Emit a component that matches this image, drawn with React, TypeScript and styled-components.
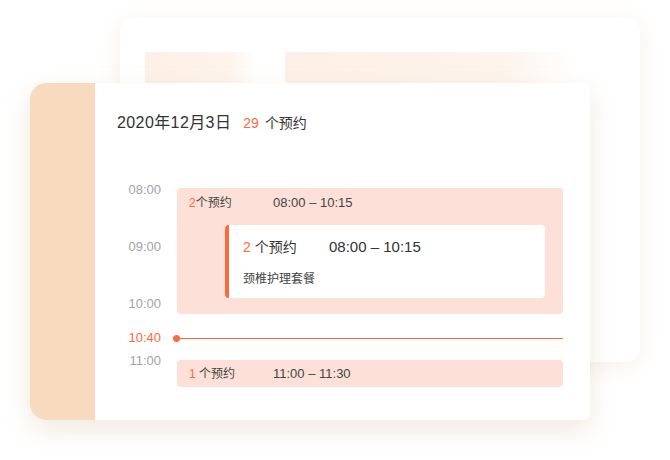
import React from 'react';
import styled, {createGlobalStyle} from "styled-components";

const ORANGE = "#ff6a3d"

const GlobalStyle = createGlobalStyle`
  body {
    margin: 0;
    background: #ffffff;
    font-family: "Liberation Sans", "Noto Sans CJK SC", sans-serif;
  }
`

const Stage = styled.div`
  position: relative;
  width: 670px;
  height: 460px;
  padding: 83px 0 0 30px;
  box-sizing: border-box;
  overflow: hidden;
`

const BackCard = styled.div`
  position: absolute;
  left: 120px;
  top: 18px;
  width: 520px;
  height: 344px;
  border-radius: 14px;
  background: #fff;
  box-shadow: 0 4px 22px rgba(214, 188, 150, 0.22);
  display: flex;
  gap: 28px;
  padding: 34px 0 0 25px;
  box-sizing: border-box;
`

const GhostBar = styled.div<{$w: number}>`
  width: ${p => p.$w}px;
  height: 40px;
  background: linear-gradient(90deg, #fdf0e6 0%, #fdf4ec 75%, #ffffff 100%);
`

const FrontCard = styled.div`
  position: relative;
  display: flex;
  width: 560px;
  height: 337px;
  border-radius: 16px 6px 6px 16px;
  overflow: hidden;
  background: #fff;
  box-shadow: 0 10px 26px rgba(205, 180, 140, 0.28);
`

const Strip = styled.div`
  width: 65px;
  background: #f8dbbf;
`

const Content = styled.div`
  flex: 1;
  padding: 30px 27px 0 22px;
`

const Heading = styled.div`
  display: flex;
  align-items: baseline;
  line-height: 20px;
  color: #333;
`

const DateText = styled.span`
  font-size: 16px;
  letter-spacing: 0.4px;
`

const Total = styled.span`
  margin-left: 12px;
  font-size: 14px;
  color: ${ORANGE};
`

const TotalUnit = styled.span`
  margin-left: 6px;
  font-size: 14px;
`

const Timeline = styled.div`
  display: flex;
  flex-direction: column;
  margin-top: 55px;
`

const Section = styled.div<{$gap?: number}>`
  display: grid;
  grid-template-columns: 44px 1fr;
  column-gap: 16px;
  margin-top: ${p => p.$gap ?? 0}px;
`

const Labels = styled.div`
  display: flex;
  flex-direction: column;
  justify-content: space-between;
  margin: -5px 0 3px;
`

const TimeLabel = styled.div<{$now?: boolean}>`
  text-align: right;
  font-size: 13px;
  line-height: 14px;
  color: ${p => p.$now ? ORANGE : "#a3a3a3"};
`

const Block = styled.div<{$top?: number}>`
  background: #fde0d7;
  border-radius: 4px;
  margin-top: ${p => p.$top ?? 0}px;
  padding: 8px 0 16px;
`

const SlimBlock = styled(Block)`
  padding: 7px 0 6px;
`

const BlockHeader = styled.div`
  display: flex;
  align-items: center;
  padding-left: 12px;
  line-height: 14px;
  color: #444;
`

const Count = styled.span<{$w: number; $size: number}>`
  width: ${p => p.$w}px;
  font-size: ${p => p.$size}px;
`

const Num = styled.span`
  color: ${ORANGE};
`

const Range = styled.span<{$size: number}>`
  font-size: ${p => p.$size}px;
`

const Detail = styled.div`
  margin: 15px 18px 0 48px;
  height: 73px;
  box-sizing: border-box;
  background: #fff;
  border-left: 4px solid ${ORANGE};
  border-radius: 4px;
  padding: 12px 0 0 14px;
`

const DetailHeader = styled.div`
  display: flex;
  align-items: center;
  line-height: 20px;
  color: #333;
`

const Desc = styled.div`
  margin-top: 15px;
  font-size: 12px;
  line-height: 14px;
  color: #444;
`

const NowRow = styled(Section)`
  align-items: center;
`

const NowLine = styled.div`
  display: flex;
  align-items: center;
`

const Dot = styled.span`
  width: 7px;
  height: 7px;
  margin-left: -4px;
  border-radius: 50%;
  background: ${ORANGE};
  flex-shrink: 0;
`

const Rule = styled.span`
  flex: 1;
  height: 1px;
  margin-left: -3px;
  background: #f06a45;
`

const Slot = styled.div`
  margin-top: -6px;
`

export default function App() {
    return (
        <Stage>
            <GlobalStyle/>
            <BackCard>
                <GhostBar $w={112}/>
                <GhostBar $w={290}/>
            </BackCard>
            <FrontCard>
                <Strip/>
                <Content>
                    <Heading>
                        <DateText>2020年12月3日</DateText>
                        <Total>29</Total>
                        <TotalUnit>个预约</TotalUnit>
                    </Heading>
                    <Timeline>
                        <Section>
                            <Labels>
                                <TimeLabel>08:00</TimeLabel>
                                <TimeLabel>09:00</TimeLabel>
                                <TimeLabel>10:00</TimeLabel>
                            </Labels>
                            <Block>
                                <BlockHeader>
                                    <Count $w={84} $size={12}><Num>2</Num>个预约</Count>
                                    <Range $size={13}>08:00 – 10:15</Range>
                                </BlockHeader>
                                <Detail>
                                    <DetailHeader>
                                        <Count $w={86} $size={14}><Num>2</Num> 个预约</Count>
                                        <Range $size={15}>08:00 – 10:15</Range>
                                    </DetailHeader>
                                    <Desc>颈椎护理套餐</Desc>
                                </Detail>
                            </Block>
                        </Section>
                        <NowRow $gap={17}>
                            <TimeLabel $now>10:40</TimeLabel>
                            <NowLine>
                                <Dot/>
                                <Rule/>
                            </NowLine>
                        </NowRow>
                        <Section $gap={15}>
                            <Slot>
                                <TimeLabel>11:00</TimeLabel>
                            </Slot>
                            <SlimBlock>
                                <BlockHeader>
                                    <Count $w={84} $size={12}><Num>1</Num> 个预约</Count>
                                    <Range $size={13}>11:00 – 11:30</Range>
                                </BlockHeader>
                            </SlimBlock>
                        </Section>
                    </Timeline>
                </Content>
            </FrontCard>
        </Stage>
    )
}
